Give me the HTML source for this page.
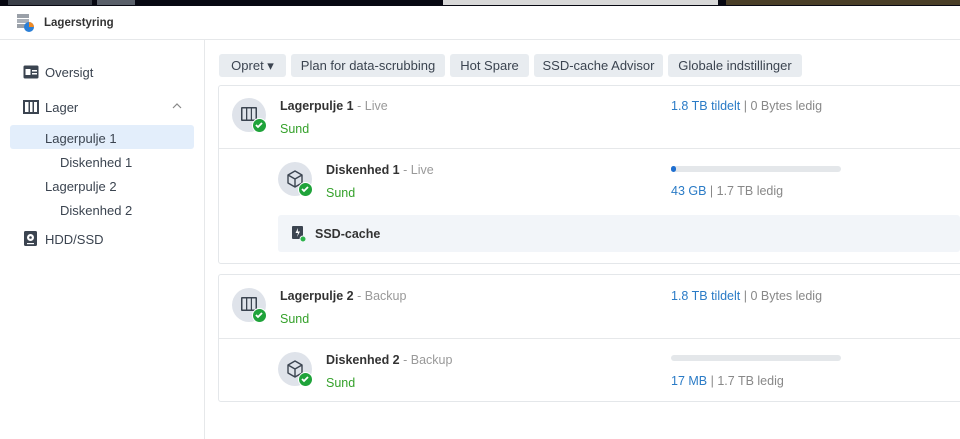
<!DOCTYPE html>
<html><head><meta charset="utf-8"><style>
*{margin:0;padding:0;box-sizing:border-box}
body{width:960px;height:439px;overflow:hidden;background:#fff;font-family:"Liberation Sans","DejaVu Sans",sans-serif;color:#333;position:relative;font-size:13px}
.a{position:absolute}
.btn{position:absolute;top:54px;height:23px;background:#e8ecf0;border-radius:3px;font-size:13px;color:#3b4450;line-height:24px;text-align:center}
.nav{position:absolute;font-size:13px;color:#3b4450}
.card{position:absolute;left:218px;width:760px;border:1px solid #e4e7ea;border-radius:3px}
.circ{position:absolute;width:34px;height:34px;border-radius:50%;background:#dfe3ea}
.chk{position:absolute;left:20px;top:20px;width:15px;height:15px;border-radius:50%;background:#1fa33a;border:1.5px solid #fff}
.t{position:absolute;font-size:12.5px;font-weight:bold;color:#333}
.t span{font-weight:normal;color:#999}
.g{position:absolute;font-size:12.5px;color:#35a12b}
.u{position:absolute;font-size:12.5px;color:#888}
.u b{font-weight:normal;color:#2a7bc6}
</style></head><body>
<div class="a" style="left:0;top:0;width:960px;height:6px;background:#070812"></div>
<div class="a" style="left:8px;top:0;width:84px;height:5px;background:#3a3f48"></div>
<div class="a" style="left:97px;top:0;width:38px;height:5px;background:#5a606a"></div>
<div class="a" style="left:443px;top:0;width:275px;height:5px;background:#d8d8d8"></div>
<div class="a" style="left:726px;top:0;width:234px;height:5px;background:#4a3f28"></div>

<svg class="a" style="left:16px;top:13px" width="20" height="20" viewBox="0 0 20 20"><rect x="1" y="1" width="12" height="4" fill="#9aa0a8"/><rect x="1" y="6" width="12" height="4" fill="#aab0b8"/><rect x="1" y="11" width="12" height="4" fill="#9aa0a8"/><circle cx="13" cy="14" r="5" fill="#2b7fd6"/><path d="M13 14 L13 9 A5 5 0 0 1 18 14Z" fill="#f08a24"/></svg>
<div class="a" style="left:44px;top:17px;font-size:11.5px;font-weight:bold;color:#333">Lagerstyring</div>
<div class="a" style="left:0;top:39px;width:960px;height:1px;background:#e6e8ea"></div>
<div class="a" style="left:204px;top:40px;width:1px;height:399px;background:#e6e8ea"></div>

<svg class="a" style="left:23px;top:65px" width="16" height="14" viewBox="0 0 16 14"><rect x="0.5" y="0.5" width="15" height="13" rx="1.5" fill="#3b4450"/><rect x="2.5" y="4" width="5" height="6" fill="#fff"/><rect x="9" y="5" width="5" height="1.5" fill="#fff"/><rect x="9" y="8" width="5" height="1.5" fill="#fff"/></svg>
<div class="nav" style="left:45px;top:65px">Oversigt</div>
<svg class="a" style="left:23px;top:100px" width="16" height="14" viewBox="0 0 16 14"><rect x="1" y="1" width="14" height="12" fill="none" stroke="#3b4450" stroke-width="2"/><rect x="5.5" y="1" width="1.5" height="12" fill="#3b4450"/><rect x="9.5" y="1" width="1.5" height="12" fill="#3b4450"/></svg>
<div class="nav" style="left:45px;top:100px">Lager</div>
<svg class="a" style="left:172px;top:103px" width="10" height="6" viewBox="0 0 10 6"><path d="M1 5 L5 1 L9 5" fill="none" stroke="#888" stroke-width="1.2"/></svg>
<div class="a" style="left:10px;top:125px;width:184px;height:24px;background:#e3eefb;border-radius:3px"></div>
<div class="nav" style="left:45px;top:131px">Lagerpulje 1</div>
<div class="nav" style="left:60px;top:155px">Diskenhed 1</div>
<div class="nav" style="left:45px;top:179px">Lagerpulje 2</div>
<div class="nav" style="left:60px;top:203px">Diskenhed 2</div>
<svg class="a" style="left:24px;top:231px" width="13" height="15" viewBox="0 0 13 15"><rect x="0" y="0" width="13" height="15" rx="1.5" fill="#3b4450"/><circle cx="6.5" cy="6.5" r="3.5" fill="#fff"/><circle cx="6.5" cy="6.5" r="1.3" fill="#3b4450"/><rect x="3" y="12" width="7" height="1.2" fill="#fff"/></svg>
<div class="nav" style="left:45px;top:232px">HDD/SSD</div>

<div class="btn" style="left:219px;width:67px">Opret ▾</div>
<div class="btn" style="left:291px;width:154px">Plan for data-scrubbing</div>
<div class="btn" style="left:450px;width:79px">Hot Spare</div>
<div class="btn" style="left:534px;width:129px">SSD-cache Advisor</div>
<div class="btn" style="left:668px;width:134px">Globale indstillinger</div>

<div class="card" style="top:85px;height:179px"></div>
<div class="a" style="left:219px;top:148px;width:741px;height:1px;background:#e6e8ea"></div>
<div class="card" style="top:274px;height:128px"></div>
<div class="a" style="left:219px;top:338px;width:741px;height:1px;background:#e6e8ea"></div>

<!-- pool 1 -->
<div class="circ" style="left:232px;top:98px"><svg class="a" style="left:8px;top:8px" width="18" height="17" viewBox="0 0 18 17"><rect x="1" y="1" width="16" height="14" rx="1" fill="#3b4450"/><rect x="2.5" y="2.5" width="3.5" height="11" fill="#dfe3ea"/><rect x="7.3" y="2.5" width="3.5" height="11" fill="#dfe3ea"/><rect x="12" y="2.5" width="3.5" height="11" fill="#dfe3ea"/></svg><div class="chk"><svg width="12" height="12" viewBox="0 0 12 12"><path d="M3 6 L5 8 L9 4" fill="none" stroke="#fff" stroke-width="1.8"/></svg></div></div>
<div class="t" style="left:280px;top:99px">Lagerpulje 1 <span>- Live</span></div>
<div class="g" style="left:280px;top:122px">Sund</div>
<div class="u" style="left:671px;top:99px"><b>1.8 TB tildelt</b> | 0 Bytes ledig</div>

<div class="circ" style="left:278px;top:162px"><svg class="a" style="left:8px;top:7px" width="18" height="20" viewBox="0 0 18 20"><path d="M9 2 L16 6 L16 14 L9 18 L2 14 L2 6Z M2 6 L9 10 L16 6 M9 10 L9 18" fill="none" stroke="#3b4450" stroke-width="1.4" stroke-linejoin="round"/></svg><div class="chk"><svg width="12" height="12" viewBox="0 0 12 12"><path d="M3 6 L5 8 L9 4" fill="none" stroke="#fff" stroke-width="1.8"/></svg></div></div>
<div class="t" style="left:326px;top:163px">Diskenhed 1 <span>- Live</span></div>
<div class="g" style="left:326px;top:186px">Sund</div>
<div class="a" style="left:671px;top:166px;width:170px;height:6px;border-radius:3px;background:#e4e7ea"></div>
<div class="a" style="left:671px;top:166px;width:5px;height:6px;border-radius:3px;background:#1f6fd0"></div>
<div class="u" style="left:671px;top:184px"><b>43 GB</b> | 1.7 TB ledig</div>

<div class="a" style="left:278px;top:215px;width:682px;height:37px;background:#f2f5f9;border-radius:3px"></div>
<svg class="a" style="left:292px;top:226px" width="14" height="16" viewBox="0 0 14 16"><rect x="0" y="0" width="11" height="13" rx="1" fill="#3b4450"/><path d="M6 2 L3.5 7 L6 7 L5 11 L8 5.5 L5.8 5.5Z" fill="#fff"/><circle cx="11" cy="13" r="3" fill="#2cb34a" stroke="#f2f5f9" stroke-width="1"/></svg>
<div class="t" style="left:315px;top:227px">SSD-cache</div>

<!-- pool 2 -->
<div class="circ" style="left:232px;top:288px"><svg class="a" style="left:8px;top:8px" width="18" height="17" viewBox="0 0 18 17"><rect x="1" y="1" width="16" height="14" rx="1" fill="#3b4450"/><rect x="2.5" y="2.5" width="3.5" height="11" fill="#dfe3ea"/><rect x="7.3" y="2.5" width="3.5" height="11" fill="#dfe3ea"/><rect x="12" y="2.5" width="3.5" height="11" fill="#dfe3ea"/></svg><div class="chk"><svg width="12" height="12" viewBox="0 0 12 12"><path d="M3 6 L5 8 L9 4" fill="none" stroke="#fff" stroke-width="1.8"/></svg></div></div>
<div class="t" style="left:280px;top:289px">Lagerpulje 2 <span>- Backup</span></div>
<div class="g" style="left:280px;top:312px">Sund</div>
<div class="u" style="left:671px;top:289px"><b>1.8 TB tildelt</b> | 0 Bytes ledig</div>

<div class="circ" style="left:278px;top:352px"><svg class="a" style="left:8px;top:7px" width="18" height="20" viewBox="0 0 18 20"><path d="M9 2 L16 6 L16 14 L9 18 L2 14 L2 6Z M2 6 L9 10 L16 6 M9 10 L9 18" fill="none" stroke="#3b4450" stroke-width="1.4" stroke-linejoin="round"/></svg><div class="chk"><svg width="12" height="12" viewBox="0 0 12 12"><path d="M3 6 L5 8 L9 4" fill="none" stroke="#fff" stroke-width="1.8"/></svg></div></div>
<div class="t" style="left:326px;top:353px">Diskenhed 2 <span>- Backup</span></div>
<div class="g" style="left:326px;top:376px">Sund</div>
<div class="a" style="left:671px;top:355px;width:170px;height:6px;border-radius:3px;background:#e4e7ea"></div>
<div class="u" style="left:671px;top:374px"><b>17 MB</b> | 1.7 TB ledig</div>
</body></html>
